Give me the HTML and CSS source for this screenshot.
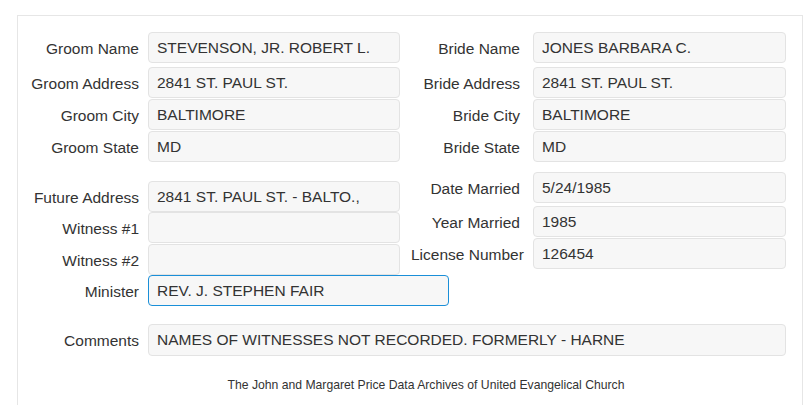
FILE: index.html
```html
<!DOCTYPE html>
<html lang="en">
	<head>
		<meta charset="utf-8">
		<title>Marriage Record</title>
		<link rel="stylesheet" href="styles.css">
	</head>
	<body>
		<div id="page-wrapper">
			<div class="record-panel">

				<!-- groom / bride -->
				<div class="section">
					<div class="stack stack-left">
						<div class="row"><label class="lbl">Groom Name</label><input class="field" type="text" value="STEVENSON, JR. ROBERT L." readonly></div>
						<div class="row gap-4"><label class="lbl">Groom Address</label><input class="field" type="text" value="2841 ST. PAUL ST." readonly></div>
						<div class="row"><label class="lbl">Groom City</label><input class="field" type="text" value="BALTIMORE" readonly></div>
						<div class="row"><label class="lbl">Groom State</label><input class="field" type="text" value="MD" readonly></div>
					</div>
					<div class="stack stack-right">
						<div class="row"><label class="lbl">Bride Name</label><input class="field" type="text" value="JONES BARBARA C." readonly></div>
						<div class="row gap-4"><label class="lbl">Bride Address</label><input class="field" type="text" value="2841 ST. PAUL ST." readonly></div>
						<div class="row"><label class="lbl">Bride City</label><input class="field" type="text" value="BALTIMORE" readonly></div>
						<div class="row"><label class="lbl">Bride State</label><input class="field" type="text" value="MD" readonly></div>
					</div>
				</div>

				<!-- marriage details -->
				<div class="section section-details">
					<div class="stack stack-left stack-low">
						<div class="row"><label class="lbl">Future Address</label><input class="field" type="text" value="2841 ST. PAUL ST. - BALTO.," readonly></div>
						<div class="row gap-0"><label class="lbl">Witness #1</label><input class="field" type="text" value="" readonly></div>
						<div class="row"><label class="lbl">Witness #2</label><input class="field" type="text" value="" readonly></div>
						<div class="row gap-0"><label class="lbl">Minister</label><input class="field field-focus" type="text" value="REV. J. STEPHEN FAIR" readonly></div>
					</div>
					<div class="stack stack-right">
						<div class="row"><label class="lbl">Date Married</label><input class="field" type="text" value="5/24/1985" readonly></div>
						<div class="row gap-3"><label class="lbl">Year Married</label><input class="field" type="text" value="1985" readonly></div>
						<div class="row"><label class="lbl">License Number</label><input class="field" type="text" value="126454" readonly></div>
					</div>
				</div>

				<div class="comments">
					<div class="row"><label class="lbl">Comments</label><input class="field field-wide" type="text" value="NAMES OF WITNESSES NOT RECORDED. FORMERLY - HARNE" readonly></div>
				</div>

				<p class="credit">The John and Margaret Price Data Archives of United Evangelical Church</p>
			</div>
		</div>
	</body>
</html>
```

FILE: styles.css
```css
html, body {
	background: #ffffff;
	margin: 0;
}
body {
	font-family: "Liberation Sans", Arial, Helvetica, sans-serif;
	font-size: 15.5px;
	line-height: 1.4;
	color: #333333;
}
#page-wrapper {
	padding: 15px 0 0 17px;
}
.record-panel {
	box-sizing: border-box;
	width: 786px;
	border: 1px solid #e6e6e6;
	padding: 16px 16px 60px 0;
	background: #ffffff;
}

.section {
	display: flex;
	align-items: flex-start;
}
.section-details {
	margin-top: 10px;
}
.stack {
	flex: none;
}
.stack-left {
	width: 382px;
}
.stack-right {
	width: 386px;
}
.stack-low {
	margin-top: 9px;
}

.row {
	display: flex;
	align-items: center;
}
.row + .row {
	margin-top: 1px;
}
.row.gap-0 {
	margin-top: 0;
}
.row.gap-3 {
	margin-top: 3px;
}
.row.gap-4 {
	margin-top: 4px;
}

.lbl {
	box-sizing: border-box;
	flex: none;
	text-align: right;
	white-space: nowrap;
	padding-top: 2px;
}
.stack-left .lbl,
.comments .lbl {
	width: 130px;
	padding-right: 9px;
}
.stack-right .lbl {
	width: 133px;
	padding-left: 11px;
	padding-right: 13px;
}

.field {
	box-sizing: border-box;
	flex: none;
	height: 31px;
	margin: 0;
	padding: 0 8px;
	border: 1px solid #e3e3e3;
	border-radius: 4px;
	background: #f7f7f7;
	font-family: inherit;
	font-size: 15.5px;
	color: #333333;
	outline: none;
}
.stack-left .field {
	width: 252px;
}
.stack-right .field {
	width: 253px;
}
.stack-left .field-focus {
	width: 301px;
	border-color: #1a8fd8;
}
.comments .field-wide {
	width: 638px;
	height: 32px;
}

.comments {
	margin-top: 18px;
}

.credit {
	margin: 21px 0 0;
	padding-left: 48px;
	text-align: center;
	font-size: 12.2px;
	line-height: 17px;
}
```
